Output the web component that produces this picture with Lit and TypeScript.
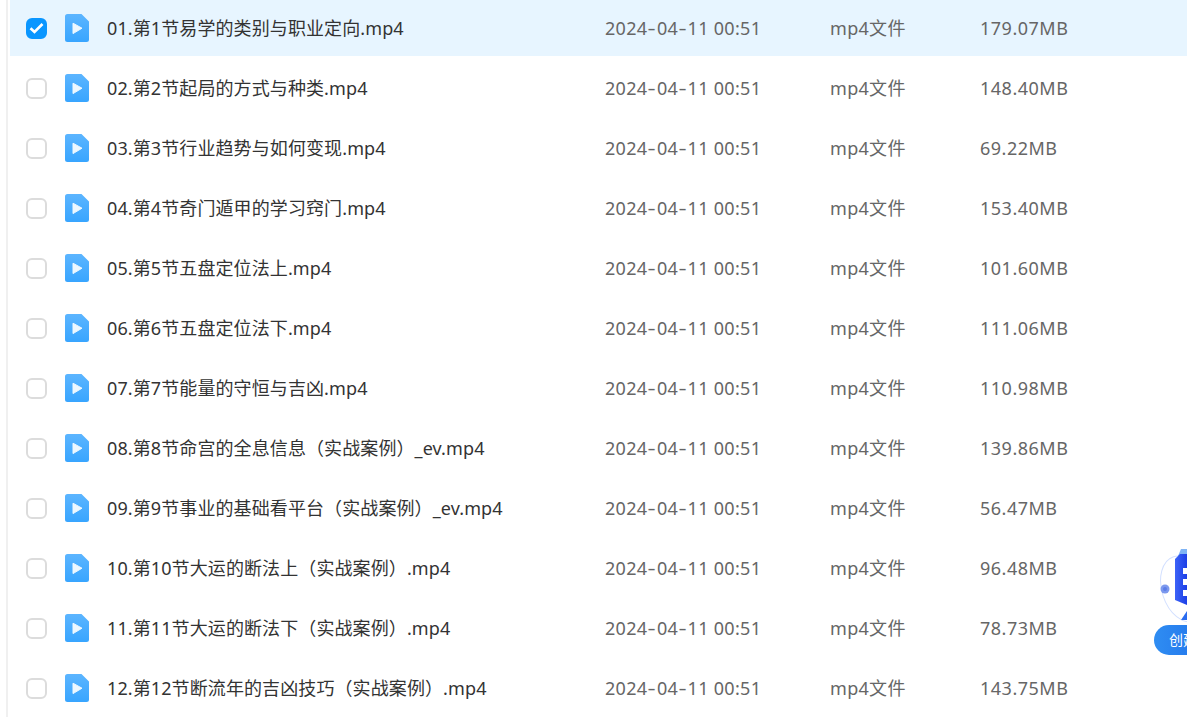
import { LitElement, html, css, svg } from "lit";
import { customElement } from "lit/decorators.js";

const files: [string, string][] = [
  ["01.第1节易学的类别与职业定向.mp4", "179.07MB"],
  ["02.第2节起局的方式与种类.mp4", "148.40MB"],
  ["03.第3节行业趋势与如何变现.mp4", "69.22MB"],
  ["04.第4节奇门遁甲的学习窍门.mp4", "153.40MB"],
  ["05.第5节五盘定位法上.mp4", "101.60MB"],
  ["06.第6节五盘定位法下.mp4", "111.06MB"],
  ["07.第7节能量的守恒与吉凶.mp4", "110.98MB"],
  ["08.第8节命宫的全息信息（实战案例）_ev.mp4", "139.86MB"],
  ["09.第9节事业的基础看平台（实战案例）_ev.mp4", "56.47MB"],
  ["10.第10节大运的断法上（实战案例）.mp4", "96.48MB"],
  ["11.第11节大运的断法下（实战案例）.mp4", "78.73MB"],
  ["12.第12节断流年的吉凶技巧（实战案例）.mp4", "143.75MB"],
];

const fileIcon = svg`<svg width="24" height="28" viewBox="0 0 24 28">
  <defs><linearGradient id="g" x1="0" y1="0" x2="0" y2="1"><stop offset="0" stop-color="#5CB5FF"/><stop offset="1" stop-color="#38A5FF"/></linearGradient></defs>
  <path d="M2.5 0H16.5L24 7.5V25.5a2.5 2.5 0 0 1-2.5 2.5H2.5A2.5 2.5 0 0 1 0 25.5V2.5A2.5 2.5 0 0 1 2.5 0Z" fill="url(#g)"/>
  <path d="M8 9.2L17 14.2L8 19.6Z" fill="#EEF8FF" stroke="#EEF8FF" stroke-width="1" stroke-linejoin="round"/>
</svg>`;

@customElement("app-root")
export class AppRoot extends LitElement {
  static styles = css`
    :host {
      display: block;
      height: 717px;
      overflow: hidden;
      position: relative;
      background: #fff;
      font-family: "Noto Sans", "Noto Sans CJK SC", sans-serif;
    }
    .page { height: 717px; overflow: hidden; padding-left: 6px; box-sizing: border-box; }
    .panel { height: 100%; border-left: 2px solid #f0f0f0; padding-left: 2px; }
    .list { display: flex; flex-direction: column; gap: 4px; }
    .row {
      flex: none;
      height: 56px;
      display: grid;
      grid-template-columns: 16px 39px 42px 498px 225px 150px 1fr;
      align-items: center;
      font-size: 18px;
      line-height: 24px;
      color: #666;
      letter-spacing: 0.3px;
    }
    .row.sel { background: #e7f5ff; }
    .spacer { display: block; }
    .check {
      width: 21px; height: 21px;
      box-sizing: border-box;
      border: 2px solid #dcdcdc;
      border-radius: 6px;
      background: #fff;
      display: flex; align-items: center; justify-content: center;
    }
    .sel .check { background: #0a96ff; border-color: #0a96ff; }
    .icon { display: flex; }
    .name { color: #333; white-space: nowrap; letter-spacing: 0.1px; }
    .hy { display: inline-block; width: 9.5px; text-align: center; transform: scaleX(1.4); }
    .size { letter-spacing: 0.5px; }
    .bot { position: absolute; left: 1154px; top: 548px; width: 33px; height: 110px; overflow: hidden; }
    .bot-btn {
      position: absolute; left: 0; top: 77px; width: 60px; height: 30px;
      border-radius: 15px 0 0 15px; background: linear-gradient(90deg, #2f8df2, #1f70ea); color: #fff;
      font-size: 14px; line-height: 30px; padding-left: 15px; box-sizing: border-box; white-space: nowrap;
    }
    .bot-art { position: absolute; left: 0; top: 0; overflow: visible; }
  `;

  render() {
    return html`<div class="page"><div class="panel"><div class="list">
      ${files.map(([n, s], i) => html`<div class="row ${i === 0 ? "sel" : ""}">
        <span class="spacer"></span>
        <span class="check">${i === 0 ? svg`<svg width="15" height="12" viewBox="0 0 15 12"><path d="M1.5 6.2L5.5 10L13.5 2" fill="none" stroke="#fff" stroke-width="2.6"/></svg>` : ""}</span>
        <span class="icon">${fileIcon}</span>
        <span class="name">${n}</span>
        <span>2024<span class="hy">-</span>04<span class="hy">-</span>11 00:51</span>
        <span>mp4文件</span>
        <span class="size">${s}</span>
      </div>`)}
    </div></div></div>
    <div class="bot">
      <svg class="bot-art" width="33" height="80" viewBox="0 0 33 80">
        <defs><linearGradient id="b" x1="0" y1="0" x2="1" y2="0"><stop offset="0" stop-color="#3d63f7"/><stop offset="1" stop-color="#1c3fe6"/></linearGradient></defs>
        <ellipse cx="30" cy="41" rx="22" ry="34" transform="rotate(-18 30 41)" fill="none" stroke="#d3e0ff" stroke-width="1"/>
        <circle cx="11" cy="41" r="4.5" fill="#7b98ee"/>
        <circle cx="11" cy="41" r="2" fill="#5a7de8"/>
        <path d="M27 1H33V8H24Z" fill="#7fb4f5"/>
        <path d="M21 11 L26 6 H33 V57 L21 52Z" fill="url(#b)"/>
        <rect x="29" y="20" width="4" height="6" fill="#fff"/>
        <rect x="29" y="31" width="4" height="6" fill="#fff"/>
        <rect x="29" y="42" width="4" height="6" fill="#fff"/>
        <path d="M27 72 L33 63 V72Z" fill="#2a6cf0"/>
      </svg>
      <div class="bot-btn">创建</div>
    </div>`;
  }
}
